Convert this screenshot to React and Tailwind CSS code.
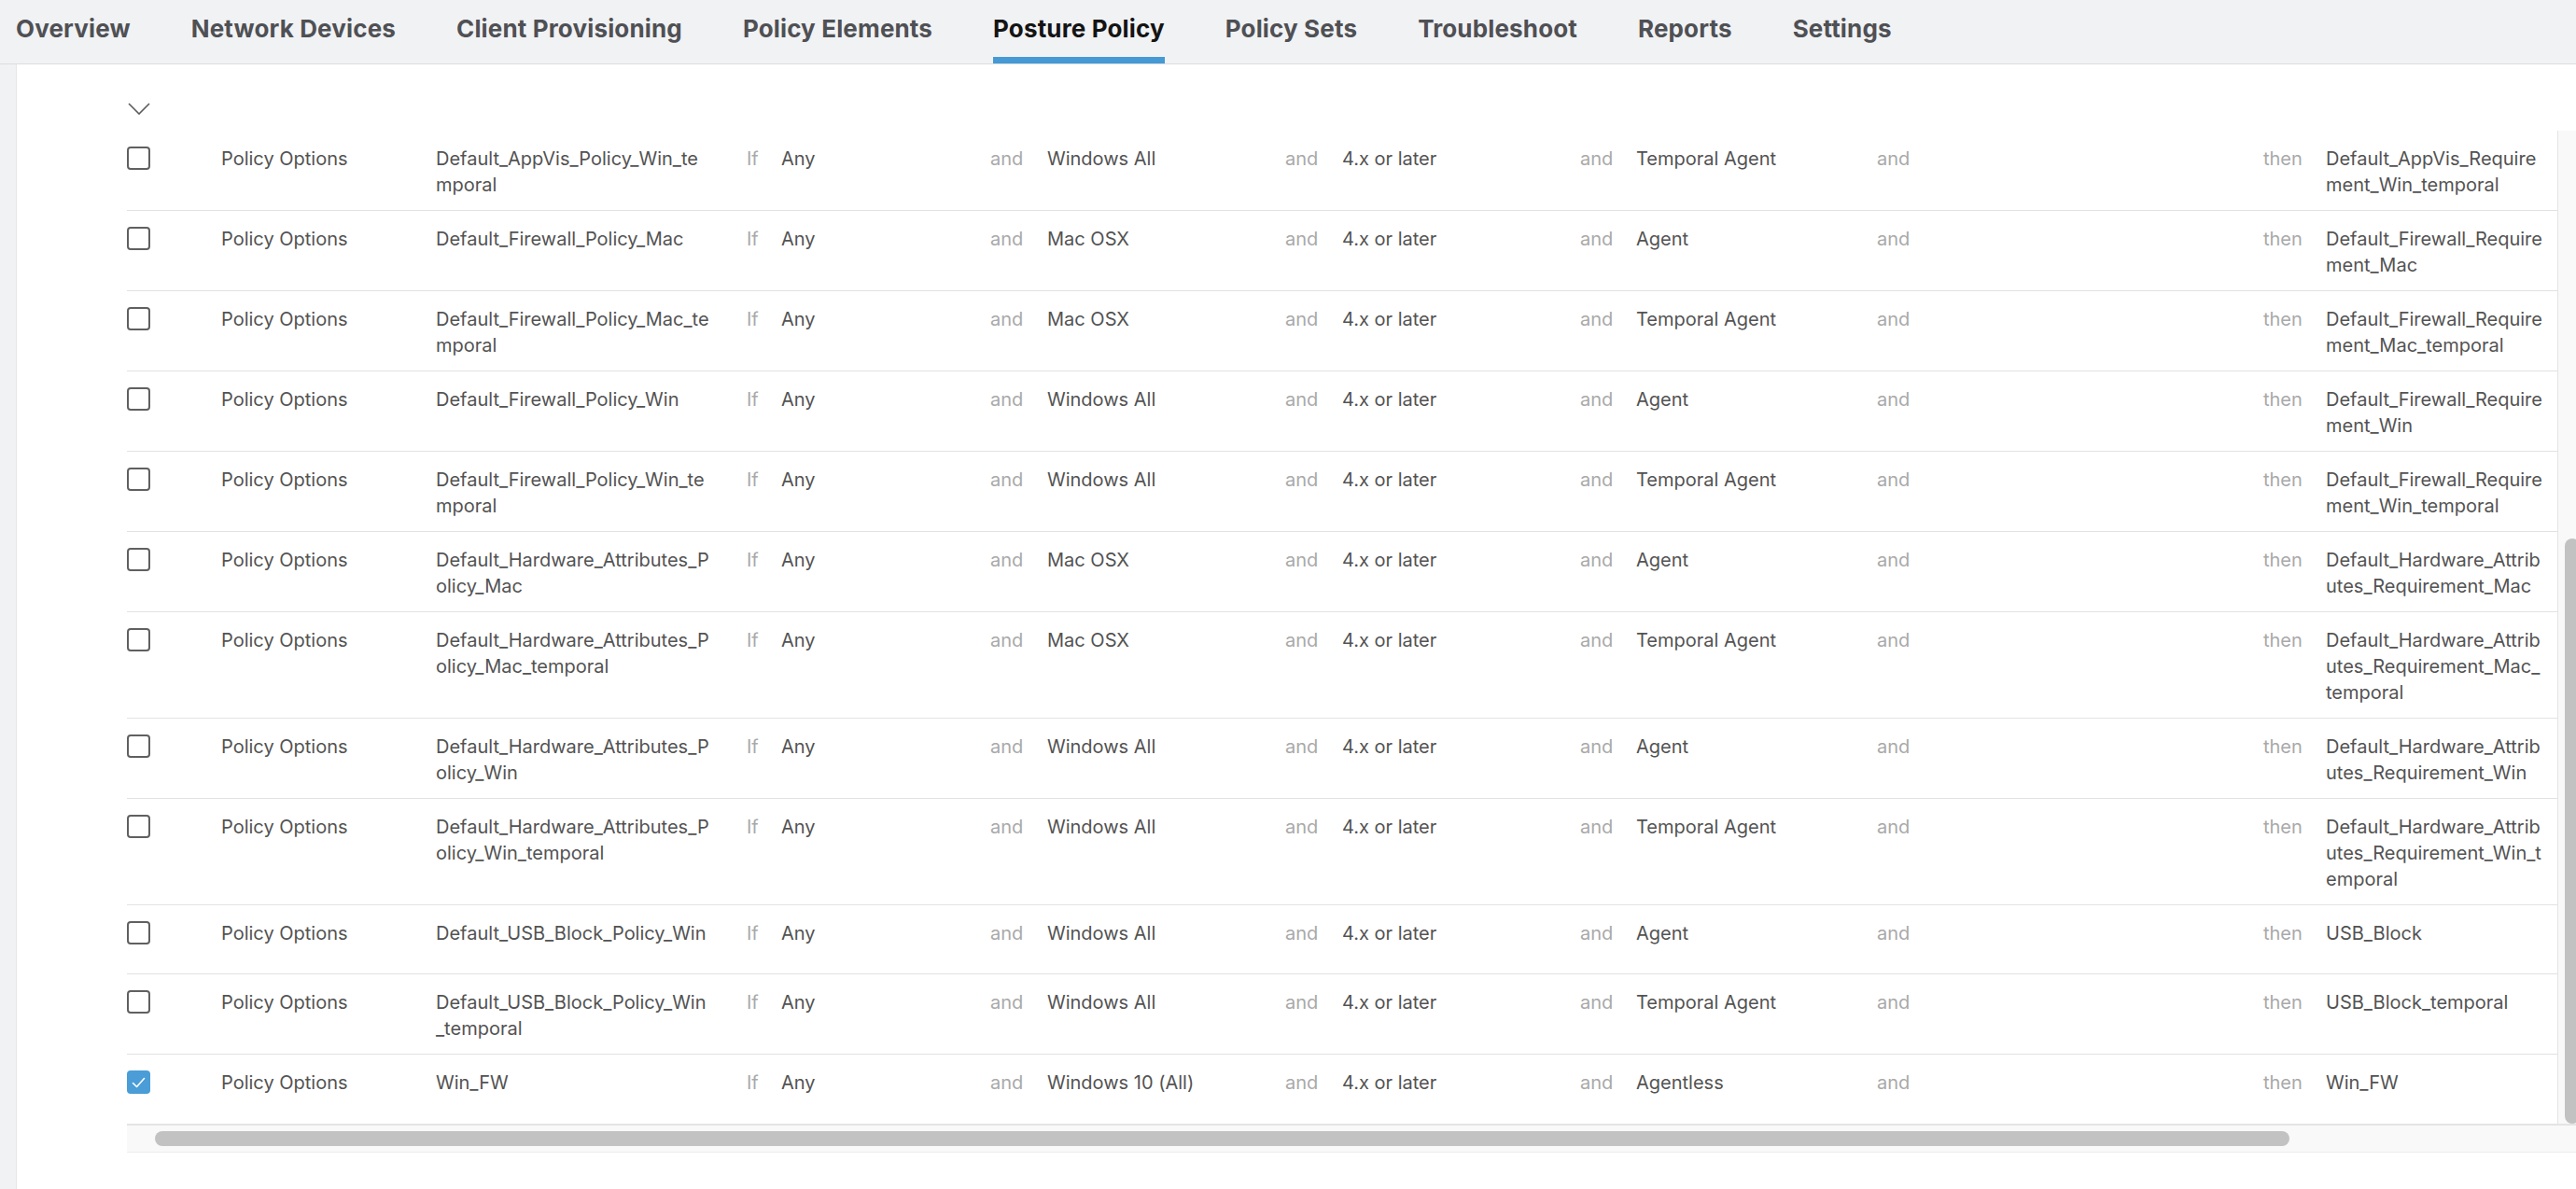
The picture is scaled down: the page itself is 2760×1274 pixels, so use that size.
const tabs = ["Overview", "Network Devices", "Client Provisioning", "Policy Elements", "Posture Policy", "Policy Sets", "Troubleshoot", "Reports", "Settings"];

const rows = [
  { name: ["Default_AppVis_Policy_Win_te", "mporal"], os: "Windows All", agent: "Temporal Agent", req: ["Default_AppVis_Require", "ment_Win_temporal"] },
  { name: ["Default_Firewall_Policy_Mac"], os: "Mac OSX", agent: "Agent", req: ["Default_Firewall_Require", "ment_Mac"] },
  { name: ["Default_Firewall_Policy_Mac_te", "mporal"], os: "Mac OSX", agent: "Temporal Agent", req: ["Default_Firewall_Require", "ment_Mac_temporal"] },
  { name: ["Default_Firewall_Policy_Win"], os: "Windows All", agent: "Agent", req: ["Default_Firewall_Require", "ment_Win"] },
  { name: ["Default_Firewall_Policy_Win_te", "mporal"], os: "Windows All", agent: "Temporal Agent", req: ["Default_Firewall_Require", "ment_Win_temporal"] },
  { name: ["Default_Hardware_Attributes_P", "olicy_Mac"], os: "Mac OSX", agent: "Agent", req: ["Default_Hardware_Attrib", "utes_Requirement_Mac"] },
  { name: ["Default_Hardware_Attributes_P", "olicy_Mac_temporal"], os: "Mac OSX", agent: "Temporal Agent", req: ["Default_Hardware_Attrib", "utes_Requirement_Mac_", "temporal"] },
  { name: ["Default_Hardware_Attributes_P", "olicy_Win"], os: "Windows All", agent: "Agent", req: ["Default_Hardware_Attrib", "utes_Requirement_Win"] },
  { name: ["Default_Hardware_Attributes_P", "olicy_Win_temporal"], os: "Windows All", agent: "Temporal Agent", req: ["Default_Hardware_Attrib", "utes_Requirement_Win_t", "emporal"] },
  { name: ["Default_USB_Block_Policy_Win"], os: "Windows All", agent: "Agent", req: ["USB_Block"] },
  { name: ["Default_USB_Block_Policy_Win", "_temporal"], os: "Windows All", agent: "Temporal Agent", req: ["USB_Block_temporal"] },
  { name: ["Win_FW"], os: "Windows 10 (All)", agent: "Agentless", req: ["Win_FW"], checked: true },
];

function Lines({ items }) {
  return items.map((l, i) => <div key={i}>{l}</div>);
}

function Checkbox({ checked }) {
  if (checked) {
    return (
      <div className="mt-[1px] w-[25px] h-[25px] rounded-[4px] bg-[#4a9dd6] flex items-center justify-center">
        <svg width="15" height="12" viewBox="0 0 15 12" fill="none">
          <path d="M1.5 6.5 L5.5 10.5 L13.5 1.5" stroke="white" strokeWidth="1.6" strokeLinecap="round" strokeLinejoin="round" />
        </svg>
      </div>
    );
  }
  return <div className="mt-[1px] w-[25px] h-[25px] rounded-[4px] border-2 border-[#606060] bg-white" />;
}

function Row({ r, last }) {
  const kw = "text-[#a9a9a9]";
  return (
    <div className={`grid grid-cols-[101px_230px_333px_37px_224px_61px_255px_61px_255px_60px_258px_414px_67px_1fr] pt-[16px] pb-[13px] min-h-[74px] ${last ? "" : "border-b border-[#e2e2e2]"}`}>
      <div><Checkbox checked={r.checked} /></div>
      <div>Policy Options</div>
      <div><Lines items={r.name} /></div>
      <div className={kw}>If</div>
      <div>Any</div>
      <div className={kw}>and</div>
      <div>{r.os}</div>
      <div className={kw}>and</div>
      <div>4.x or later</div>
      <div className={kw}>and</div>
      <div>{r.agent}</div>
      <div className={kw}>and</div>
      <div className={kw}>then</div>
      <div><Lines items={r.req} /></div>
    </div>
  );
}

export default function App() {
  return (
    <div className="w-[2760px] h-[1274px] overflow-hidden bg-[#f1f2f4] font-['Inter',sans-serif]">
      {/* tabs */}
      <div className="h-[69px] flex gap-[65px] pl-[17px] border-b border-[#dcdde0]">
        {tabs.map(t => (
          <div key={t} className="flex flex-col h-full">
            <div className={`flex-1 flex items-center text-[26px] font-bold tracking-[0.15px] ${t === "Posture Policy" ? "text-[#141414]" : "text-[#4f5054]"}`}>
              {t}
            </div>
            <div className={`h-[7px] ${t === "Posture Policy" ? "bg-[#4599d4]" : ""}`} />
          </div>
        ))}
      </div>

      {/* content panel */}
      <div className="ml-[17px] h-[1205px] bg-white border-l border-[#e6e6e8] pl-[118px] text-[20px] leading-[28px] text-[#535353]">
        <div className="h-[71px] pt-[41px] pl-[1px]">
          <svg width="24" height="13" viewBox="0 0 24 13" fill="none">
            <polyline points="1,1 12,12 23,1" stroke="#5a5a5a" strokeWidth="1.6" />
          </svg>
        </div>

        <div className="flex">
          <div className="w-[2604px]">
            {rows.map((r, i) => <Row key={i} r={r} last={i === rows.length - 1} />)}
          </div>
          <div className="relative w-[20px] bg-[#f9f9f9] border-l border-[#e4e4e4]">
            <div className="absolute left-[7px] top-[437px] bottom-0 w-[16px] rounded-full bg-[#c2c2c2]" />
          </div>
        </div>

        {/* horizontal scrollbar */}
        <div className="relative h-[31px] bg-[#f9f9f9] border-t-2 border-b border-t-[#e4e4e4] border-b-[#ececec]">
          <div className="absolute left-[30px] top-[6px] w-[2287px] h-[16px] rounded-full bg-[#c2c2c2]" />
        </div>
      </div>
    </div>
  );
}
